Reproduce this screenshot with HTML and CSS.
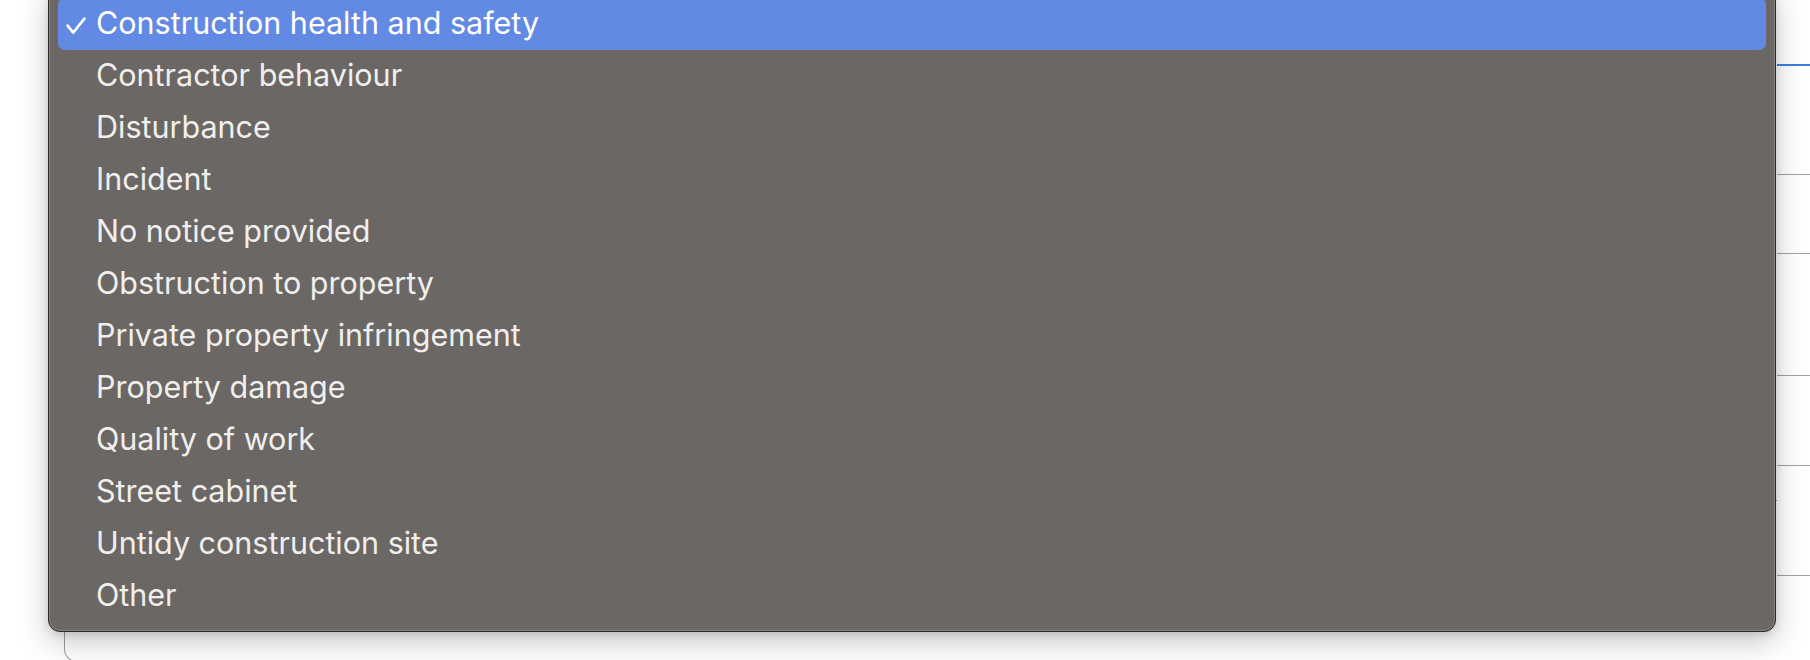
FILE: index.html
```html
<!DOCTYPE html>
<html lang="en">
<head>
<meta charset="utf-8">
<title>Complaint category</title>
<link rel="stylesheet" href="styles.css">
</head>
<body>
<div class="page">
  <div class="form-col">
    <div class="select-box"></div>
  </div>
  <div class="table-col">
    <div class="trow trow-focus"></div>
    <div class="trow trow-2"></div>
    <div class="trow trow-3"></div>
    <div class="trow trow-4"></div>
    <div class="trow trow-5"></div>
    <div class="trow trow-6"></div>
  </div>
</div>

<div class="menu" role="listbox">
  <div class="item selected" role="option" aria-selected="true">
    <span class="mark"><svg class="check" viewBox="0 0 20 18" width="20" height="18"><polyline points="1.6,8.6 7.2,15.6 18.4,1.6" fill="none" stroke="#ffffff" stroke-width="2.6" stroke-linecap="round" stroke-linejoin="round"/></svg></span>
    <span class="label">Construction health and safety</span>
  </div>
  <div class="item" role="option"><span class="mark"></span><span class="label">Contractor behaviour</span></div>
  <div class="item" role="option"><span class="mark"></span><span class="label">Disturbance</span></div>
  <div class="item" role="option"><span class="mark"></span><span class="label">Incident</span></div>
  <div class="item" role="option"><span class="mark"></span><span class="label">No notice provided</span></div>
  <div class="item" role="option"><span class="mark"></span><span class="label">Obstruction to property</span></div>
  <div class="item" role="option"><span class="mark"></span><span class="label">Private property infringement</span></div>
  <div class="item" role="option"><span class="mark"></span><span class="label">Property damage</span></div>
  <div class="item" role="option"><span class="mark"></span><span class="label">Quality of work</span></div>
  <div class="item" role="option"><span class="mark"></span><span class="label">Street cabinet</span></div>
  <div class="item" role="option"><span class="mark"></span><span class="label">Untidy construction site</span></div>
  <div class="item" role="option"><span class="mark"></span><span class="label">Other</span></div>
</div>
</body>
</html>
```

FILE: styles.css
```css
html, body {
  margin: 0;
  padding: 0;
  background: #ffffff;
  width: 1810px;
  height: 660px;
  overflow: hidden;
  font-family: Inter, "Noto Sans", "Liberation Sans", sans-serif;
}

.page {
  position: relative;
  display: grid;
  grid-template-columns: 1777px 33px;
  height: 660px;
}

.form-col {
  display: flex;
  flex-direction: column;
  justify-content: flex-end;
  padding-left: 64px;
}

.select-box {
  height: 160px;
  margin-bottom: -2px;
  border: 1px solid #9c9c9c;
  border-right: none;
  border-radius: 13px 0 0 13px;
  background: #ffffff;
}

.table-col {
  display: flex;
  flex-direction: column;
  background: #ffffff;
}

.trow {
  border-bottom: 1px solid #a2a2a2;
  flex: none;
}

.trow-focus {
  height: 64px;
  border-bottom: 2px solid #3f7de2;
}

.trow-2 { height: 108px; }
.trow-3 { height: 78px; }
.trow-4 { height: 121px; }
.trow-5 { height: 89px; }
.trow-6 { height: 109px; }

.menu {
  position: absolute;
  left: 48px;
  top: -12px;
  width: 1728px;
  box-sizing: border-box;
  padding: 9px;
  background: #6b6764;
  border: 1px solid #2e2c2b;
  border-radius: 12px;
  box-shadow:
    inset 0 0 0 1px rgba(255, 255, 255, 0.16),
    0 10px 30px rgba(0, 0, 0, 0.22),
    0 2px 8px rgba(0, 0, 0, 0.12);
}

.item {
  display: flex;
  align-items: flex-start;
  height: 52px;
  box-sizing: border-box;
  font-size: 30.5px;
  line-height: 49px;
  color: #f1efed;
  border-radius: 7px;
  white-space: nowrap;
}

.item.selected {
  background: #628ae4;
  color: #ffffff;
}

.mark {
  flex: none;
  width: 38px;
  height: 52px;
  position: relative;
}

.check {
  position: absolute;
  left: 8px;
  top: 19px;
}

.label {
  letter-spacing: 0;
}
```
